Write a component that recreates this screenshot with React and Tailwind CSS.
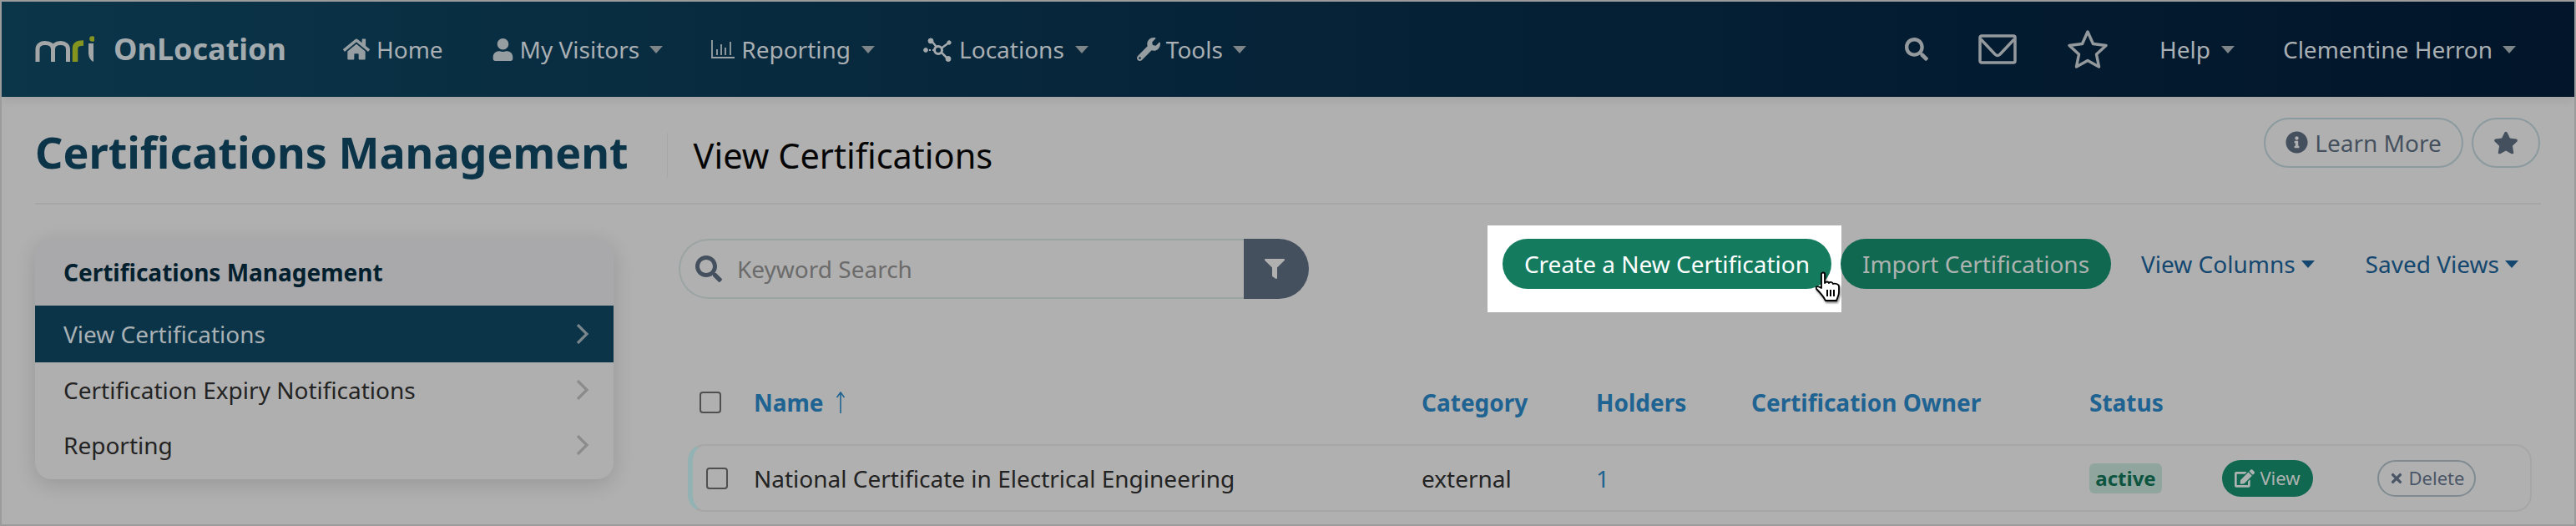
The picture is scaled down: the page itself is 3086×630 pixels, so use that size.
import { FaHome, FaUser, FaWrench, FaSearch, FaFilter, FaStar, FaInfoCircle, FaTimes, FaEdit } from 'react-icons/fa'

function Caret({ className }) {
  return <span className={`inline-block w-0 h-0 border-x-[8px] border-x-transparent border-t-[9px] ${className}`} />
}

function Logo() {
  return (
    <svg width="71" height="32" viewBox="0 0 71 32" fill="none">
      <path d="M3 31V16C3 11 7 8.5 12 8.5C18 8.5 21.5 11.5 21.5 16V31M21.5 16C21.5 11.5 25 8.5 30.5 8.5C36 8.5 39.5 11.5 39.5 16V31" stroke="#a3a6a7" strokeWidth="5" />
      <path d="M48 31V15C48 11 51 8.5 58 8.5" stroke="#84941f" strokeWidth="6.5" />
      <path d="M64 9H70V31C66 29 64 25 64 20Z" fill="#a3a6a7" />
      <circle cx="68.5" cy="3.5" r="3.3" fill="#84941f" />
    </svg>
  )
}

function ChartIcon() {
  return (
    <svg width="28" height="22" viewBox="0 0 28 22" fill="none" stroke="#9aa1a5" strokeWidth="1.8">
      <path d="M1 0V21H28" />
      <path d="M7 18V11M12 18V5M17 18V9M23 18V2" />
    </svg>
  )
}

function NetworkIcon() {
  return (
    <svg width="35" height="29" viewBox="0 0 35 29" fill="#a3a9ad" stroke="#a3a9ad">
      <path d="M10 4L19 15L29 25M20 14L31 6" strokeWidth="2.5" fill="none" />
      <path d="M3 15H14" strokeWidth="2" strokeDasharray="2 2" fill="none" />
      <circle cx="9" cy="4" r="3" />
      <circle cx="30" cy="25.5" r="3" />
      <circle cx="31" cy="6" r="2.2" />
      <circle cx="3" cy="15" r="2.4" />
      <circle cx="18" cy="15" r="4.5" fill="#06283c" strokeWidth="3" />
    </svg>
  )
}

function MailIcon() {
  return (
    <svg width="46" height="36" viewBox="0 0 46 36" fill="none" stroke="#94999d" strokeWidth="3.5" strokeLinejoin="round">
      <rect x="2" y="2" width="42" height="32" rx="2" />
      <path d="M3 6L20 24C22 26 24 26 26 24L43 6" />
    </svg>
  )
}

function OutlineStar() {
  return (
    <svg width="50" height="48" viewBox="0 0 50 48" fill="none" stroke="#94999d" strokeWidth="3.5" strokeLinejoin="round">
      <path d="M25 3L31.5 17.5L47 19.5L35.5 30L38.5 45L25 37.5L11.5 45L14.5 30L3 19.5L18.5 17.5Z" />
    </svg>
  )
}

function Chevron({ className }) {
  return (
    <svg width="16" height="24" viewBox="0 0 16 24" fill="none" stroke="currentColor" strokeWidth="3.2" className={className}>
      <path d="M2 1L13 12L2 23" />
    </svg>
  )
}

function UpArrow() {
  return (
    <svg width="12" height="26" viewBox="0 0 12 26" fill="none" stroke="#1e6391" strokeWidth="1.6">
      <path d="M6 26V1M1.5 7L6 1L10.5 7" />
    </svg>
  )
}

function HandCursor() {
  return (
    <svg width="32" height="36" viewBox="0 0 32 36" className="absolute left-[2172px] top-[323px]" style={{ filter: 'drop-shadow(1px 2px 1px rgba(0,0,0,.5))' }}>
      <path d="M8 3C8 1 12 1 12 3V14C14 12 16 12 17 14C19 12 21 13 22 15C24 14 29 15 29 18V25C29 29 27 32 26 35H13C11 31 8 27 2 21C1 18 3 17 8 20Z" fill="#fff" stroke="#000" strokeWidth="1.8" strokeLinejoin="round" />
      <path d="M15 22V30M19 22V30M23 22V30" stroke="#000" strokeWidth="2" />
    </svg>
  )
}

const navItems = [
  { label: 'My Visitors', icon: <FaUser size={27} color="#979ea2" />, gap: 'gap-[7px]', ml: 'ml-[58px]' },
  { label: 'Reporting', icon: <ChartIcon />, gap: 'gap-[8px]', ml: 'ml-[58px]' },
  { label: 'Locations', icon: <NetworkIcon />, gap: 'gap-[8px]', ml: 'ml-[58px]' },
  { label: 'Tools', icon: <FaWrench size={28} color="#979ea2" />, gap: 'gap-[7px]', ml: 'ml-[58px]' },
]

function NavBar() {
  return (
    <header className="h-[114px] flex items-center bg-gradient-to-r from-[#0b3549] via-[#062338] to-[#02152a] text-[28px] text-[#a9afb3] pl-[40px] pr-[70px] shadow-[0_4px_10px_rgba(0,0,0,0.08)]">
      <Logo />
      <span className="ml-[23px] text-[36px] font-bold text-[#a4abaf]">OnLocation</span>
      <div className="ml-[68px] flex items-center gap-[8px]">
        <FaHome size={32} color="#979ea2" />
        <span>Home</span>
      </div>
      {navItems.map((item) => (
        <div key={item.label} className={`flex items-center ${item.ml} ${item.gap}`}>
          {item.icon}
          <span>{item.label}</span>
          <Caret className="ml-[5px] border-t-[#7d8589]" />
        </div>
      ))}
      <div className="ml-auto flex items-center">
        <FaSearch size={28} color="#94999d" />
        <span className="ml-[60px]"><MailIcon /></span>
        <span className="ml-[60px]"><OutlineStar /></span>
        <span className="ml-[61px]">Help</span>
        <Caret className="ml-[13px] border-t-[#7d8589]" />
        <span className="ml-[58px]">Clementine Herron</span>
        <Caret className="ml-[12px] border-t-[#7d8589]" />
      </div>
    </header>
  )
}

function TitleRow() {
  return (
    <div className="h-[129px] mx-[40px] border-b-2 border-[#a6a6a6] flex items-center">
      <h1 className="mt-[4px] text-[52px] font-bold text-[#0b3448] leading-none">Certifications Management</h1>
      <div className="ml-[46px] mt-[12px] w-px h-[54px] bg-[#a6a6a6]" />
      <h2 className="ml-[31px] mt-[14px] text-[41.5px] text-[#050505] leading-none">View Certifications</h2>
      <div className="ml-auto flex items-center gap-[10px] mb-[18px] mr-[1px]">
        <button className="h-[60px] w-[239px] rounded-full border-2 border-[#8b9a9f] flex items-center justify-center gap-[8px] text-[28px] text-[#45505f]">
          <FaInfoCircle size={27} />
          Learn More
        </button>
        <button className="h-[60px] w-[82px] rounded-full border-2 border-[#8b9a9f] flex items-center justify-center text-[#45505f]">
          <FaStar size={30} />
        </button>
      </div>
    </div>
  )
}

function Sidebar() {
  const rows = ['View Certifications', 'Certification Expiry Notifications', 'Reporting']
  return (
    <aside className="w-[693px] h-[288px] mt-[41px] rounded-[20px] overflow-hidden bg-[#afafaf] shadow-[0_6px_24px_rgba(0,0,0,0.14)] text-[28px]">
      <div className="h-[80px] bg-[#a9a9ab] flex items-center px-[34px] font-bold text-[#03202f]">Certifications Management</div>
      {rows.map((row, i) => (
        <div key={row} className={`flex items-center justify-between pl-[34px] pr-[29px] ${i === 0 ? 'h-[68px] bg-[#0b3448] text-[#a9b1b5]' : 'h-[66px] text-[#232323]'}`}>
          <span>{row}</span>
          <Chevron className={i === 0 ? 'text-[#7b868c]' : 'text-[#8b8b8b]'} />
        </div>
      ))}
    </aside>
  )
}

function Toolbar() {
  return (
    <div className="h-[161px] ml-[2px] flex items-start">
      <div className="w-[755px] h-[72px] mt-[16px] flex">
        <div className="flex-1 flex items-center rounded-l-full border-2 border-r-0 border-[#9ba3a3] pl-[18px] gap-[18px]">
          <FaSearch size={32} color="#45505f" />
          <span className="text-[28px] text-[#6b6b6b]">Keyword Search</span>
        </div>
        <div className="w-[78px] bg-[#45505f] rounded-r-full flex items-center justify-center pr-[4px]">
          <FaFilter size={24} color="#b0b0b0" />
        </div>
      </div>
      <div className="ml-[214px] flex items-start">
        <div className="bg-white pt-[16px] pb-[28px] pl-[18px] pr-[12px]">
          <button className="h-[60px] w-[394px] rounded-full bg-[#147b5f] text-white text-[28px]">Create a New Certification</button>
        </div>
        <button className="ml-[-1px] mt-[16px] h-[60px] w-[324px] rounded-full bg-[#116850] text-[#adb3b0] text-[28px]">Import Certifications</button>
        <div className="mt-[16px] h-[60px] flex items-center text-[28px] text-[#14476f]">
          <span className="ml-[36px]">View Columns</span>
          <Caret className="ml-[7px] border-t-[#14476f]" />
          <span className="ml-[61px]">Saved Views</span>
          <Caret className="ml-[7px] border-t-[#14476f]" />
        </div>
      </div>
    </div>
  )
}

function Checkbox() {
  return <span className="block w-[26px] h-[26px] rounded-[4px] border-2 border-[#4f4f4f]" />
}

function Table() {
  return (
    <div className="text-[28px]">
      <div className="h-[101px] flex items-center font-bold text-[#1e6391]">
        <span className="ml-[27px] w-[65px]"><Checkbox /></span>
        <span className="w-[98px]">Name</span>
        <span className="w-[702px] font-normal"><UpArrow /></span>
        <span className="w-[209px]">Category</span>
        <span className="w-[186px]">Holders</span>
        <span className="w-[405px]">Certification Owner</span>
        <span>Status</span>
      </div>
      <div className="w-[2209px] ml-[13px] h-[81px] flex items-center rounded-[20px] border-2 border-l-[6px] border-[#a6a6a6] border-l-[#93b2b3] text-[#232323]">
        <span className="ml-[16px] w-[57px]"><Checkbox /></span>
        <span className="w-[800px]">National Certificate in Electrical Engineering</span>
        <span className="w-[209px]">external</span>
        <span className="w-[591px] text-[#1e6391]">1</span>
        <span className="w-[87px] h-[36px] rounded-[6px] bg-[#8fa59d] text-[#0d5540] font-bold text-[24px] flex items-center justify-center">active</span>
        <button className="ml-[72px] w-[109px] h-[44px] rounded-full bg-[#116850] text-[#adb3b0] text-[22px] flex items-center justify-center gap-[6px]">
          <FaEdit size={24} />
          View
        </button>
        <button className="ml-[77px] w-[118px] h-[44px] rounded-full border-2 border-[#7f8b91] text-[#4a5667] text-[22px] flex items-center justify-center gap-[6px]">
          <FaTimes size={18} />
          Delete
        </button>
      </div>
    </div>
  )
}

export default function App() {
  return (
    <div className="relative w-[3086px] h-[630px] overflow-hidden border-2 border-[#9b9b9b] bg-[#b0b0b0] font-['Noto_Sans',sans-serif]">
      <NavBar />
      <TitleRow />
      <div className="flex pl-[40px]">
        <Sidebar />
        <div className="ml-[76px] flex-1 mt-[25px]">
          <Toolbar />
          <Table />
        </div>
      </div>
      <HandCursor />
    </div>
  )
}
